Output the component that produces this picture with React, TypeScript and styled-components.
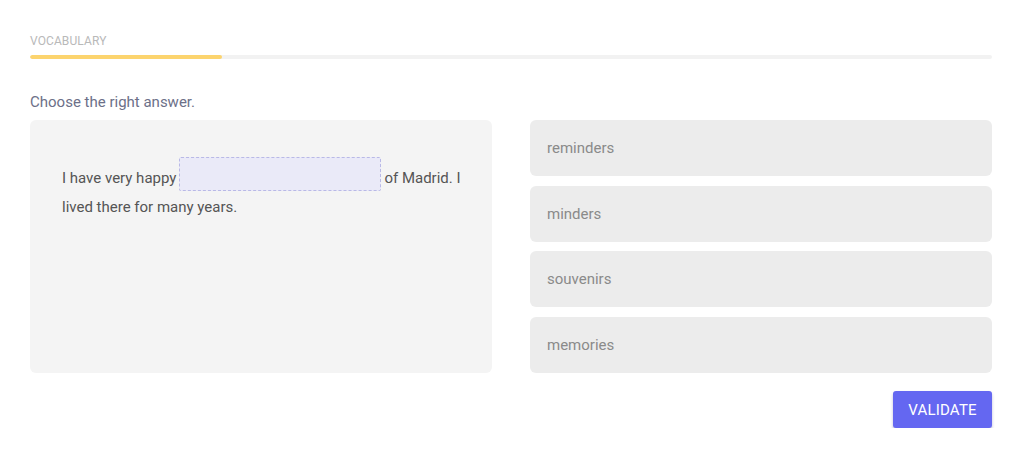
import React from "react";
import styled, { createGlobalStyle } from "styled-components";

const Global = createGlobalStyle`
  html, body { margin: 0; padding: 0; background: #ffffff; }
  body { font-family: Roboto, "Liberation Sans", Arial, sans-serif; }
  * { box-sizing: border-box; }
`;

const Page = styled.div`
  padding: 34px 32px 0 30px;
  display: flex;
  flex-direction: column;
`;

const Label = styled.div`
  font-size: 12px;
  line-height: 14px;
  color: #b9b9b9;
  letter-spacing: 0.1px;
`;

const Track = styled.div`
  margin-top: 7px;
  height: 4px;
  background: #f2f2f2;
  border-radius: 2px;
  overflow: hidden;
`;

const Fill = styled.div`
  height: 100%;
  background: #fcd46e;
  border-radius: 2px;
`;

const Instruction = styled.div`
  margin-top: 34px;
  font-size: 15px;
  line-height: 18px;
  color: #6c7088;
`;

const Columns = styled.div`
  margin-top: 9px;
  display: grid;
  grid-template-columns: 1fr 1fr;
  column-gap: 38px;
`;

const Card = styled.div`
  background: #f4f4f4;
  border-radius: 6px;
  padding: 43px 26px 42px 32px;
  height: 253px;
  font-size: 15px;
  line-height: 29px;
  color: #555555;
`;

const Blank = styled.span`
  display: inline-block;
  width: 202px;
  height: 34px;
  margin: -6px 3px 0 3px;
  vertical-align: -8px;
  background: #eaeaf8;
  border: 1px dashed #b9b9e6;
  border-radius: 2px;
`;

const Options = styled.div`
  display: flex;
  flex-direction: column;
  gap: 9.5px;
`;

const Option = styled.div`
  height: 56px;
  border-radius: 6px;
  background: #ececec;
  display: flex;
  align-items: center;
  padding-left: 17px;
  font-size: 15px;
  color: #8a8a8a;
`;

const Footer = styled.div`
  margin-top: 18px;
  display: flex;
  justify-content: flex-end;
`;

const Button = styled.button`
  height: 37px;
  width: 99px;
  border: none;
  border-radius: 3px;
  background: #6467f1;
  color: #ffffff;
  font-family: Roboto, "Liberation Sans", Arial, sans-serif;
  font-size: 15px;
  letter-spacing: 0.2px;
  text-transform: uppercase;
  box-shadow: 0 2px 3px rgba(60, 60, 140, 0.35);
  cursor: pointer;
`;

const options = ["reminders", "minders", "souvenirs", "memories"];

export default function App() {
  const progress = 20;
  return (
    <>
      <Global />
      <Page>
        <Label>VOCABULARY</Label>
        <Track>
          <Fill style={{ width: `${progress}%` }} />
        </Track>
        <Instruction>Choose the right answer.</Instruction>
        <Columns>
          <Card>
            I have very happy
            <Blank />
            of Madrid. I lived there for many years.
          </Card>
          <Options>
            {options.map((o) => (
              <Option key={o}>{o}</Option>
            ))}
          </Options>
        </Columns>
        <Footer>
          <Button>Validate</Button>
        </Footer>
      </Page>
    </>
  );
}
